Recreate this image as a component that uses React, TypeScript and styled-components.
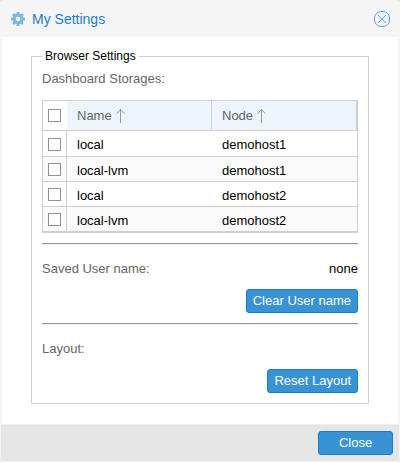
import React, { useState } from 'react';
import styled, { createGlobalStyle } from 'styled-components';

const GlobalStyle = createGlobalStyle`
  * { box-sizing: border-box; }
  body {
    margin: 0;
    background: #e6e6e6;
    font: 13px/17px "Liberation Sans", Arial, sans-serif;
    color: #000;
  }
`;

const Dialog = styled.section`
  display: flex;
  flex-direction: column;
  min-height: 100vh;
  border: 1px solid #f5f5f5;
  border-radius: 4px;
  background: #f5f5f5;
  overflow: hidden;
`;

const Header = styled.header`
  display: flex;
  align-items: center;
  gap: 7px;
  height: 36px;
  padding: 0 9px 0 10px;
`;

const Title = styled.h1`
  flex: 1;
  margin: 0;
  font-size: 14px;
  font-weight: 400;
  color: #1e80c8;
`;

const CloseTool = styled.button`
  display: flex;
  padding: 0;
  border: 0;
  background: none;
  cursor: pointer;
`;

const Body = styled.main`
  flex: 1;
  margin: 0 1px;
  padding: 11px 29px 20px;
  background: #fff;
`;

const Fieldset = styled.fieldset`
  min-width: 0;
  margin: 0;
  padding: 5px 10px 10px;
  border: 1px solid #cfcfcf;
`;

const Legend = styled.legend`
  padding: 0 3px;
  font-size: 12px;
`;

const Field = styled.div<{ $tall?: boolean }>`
  display: flex;
  justify-content: space-between;
  height: ${(p) => (p.$tall ? '30px' : '29px')};
`;

const Caption = styled.span`
  color: #666;
`;

const Grid = styled.table`
  width: 100%;
  table-layout: fixed;
  border: 1px solid #cfcfcf;
  border-spacing: 0;
  font-size: 13px;
  margin-bottom: 10px;
`;

const CheckCol = styled.col`
  width: 24px;
`;

const HeadCell = styled.th`
  height: 30px;
  padding: 0 10px;
  border-right: 1px solid #cfcfcf;
  border-bottom: 1px solid #cfcfcf;
  background: #edf4fb;
  color: #666;
  font-weight: 400;
  text-align: left;
`;

const HeadCheck = styled.th`
  padding: 0 5px;
  border-bottom: 1px solid #cfcfcf;
`;

const HeadLabel = styled.span`
  display: flex;
  align-items: center;
  gap: 4px;
`;

const Cell = styled.td`
  height: 25px;
  padding: 2px 10px 0;
  border-bottom: 1px solid #cfcfcf;
`;

const CheckCell = styled.td`
  padding: 0 0 0 5px;
  border-right: 1px solid #cfcfcf;
  border-bottom: 1px solid #cfcfcf;
`;

const Row = styled.tr`
  &:nth-child(even) { background: #fafafa; }
  &:first-child ${Cell} { height: 26px; }
  &:first-child ${CheckCell} { padding-top: 2px; }
`;

const Check = styled.input`
  display: block;
  appearance: none;
  width: 13px;
  height: 13px;
  margin: 0;
  border: 1px solid #919191;
  background: #fff;
  &:checked { background: #3892d4; }
`;

const Rule = styled.hr`
  height: 2px;
  margin: 0 0 15px;
  border: 0;
  border-top: 1px solid #999;
  border-bottom: 1px solid #eee;
`;

const Actions = styled.div`
  display: flex;
  justify-content: flex-end;
  margin-bottom: 10px;
  &:last-child { margin-bottom: 0; }
`;

const Button = styled.button<{ $wide?: boolean }>`
  height: 24px;
  min-width: ${(p) => (p.$wide ? '75px' : '0')};
  padding: 0 6px;
  border: 1px solid #157fcc;
  border-radius: 3px;
  background: #3892d4;
  color: #fff;
  font: inherit;
  line-height: 22px;
  cursor: pointer;
`;

const Footer = styled.footer`
  display: flex;
  justify-content: flex-end;
  padding: 6px;
  border-top: 1px solid #f0f0f0;
  background: #e6e6e6;
`;

const Gear = () => (
  <svg width="14" height="14" viewBox="0 0 14 14" aria-hidden="true">
    <g fill="#7fb8e1">
      {[0, 45, 90, 135].map((a) => (
        <rect key={a} x="5.5" y="0" width="3" height="14" rx="0.6" transform={`rotate(${a} 7 7)`} />
      ))}
    </g>
    <circle cx="7" cy="7" r="3.8" fill="none" stroke="#7fb8e1" strokeWidth="3.2" />
    <circle cx="7" cy="7" r="2.3" fill="#f5f5f5" />
  </svg>
);

const CloseIcon = () => (
  <svg width="16" height="16" viewBox="0 0 16 16" fill="none" aria-hidden="true">
    <rect x="0.5" y="0.5" width="15" height="15" rx="6.5" stroke="#57a3da" />
    <path d="M4 4l8 8M12 4l-8 8" stroke="#5fa7dc" />
  </svg>
);

const SortArrow = () => (
  <svg width="10" height="14" viewBox="0 0 10 14" fill="none" stroke="#999" aria-hidden="true">
    <path d="M4.5 0.5v13.5M0.5 4.8l4-4.2l4 4.2" />
  </svg>
);

const storages = [
  { name: 'local', node: 'demohost1' },
  { name: 'local-lvm', node: 'demohost1' },
  { name: 'local', node: 'demohost2' },
  { name: 'local-lvm', node: 'demohost2' },
];

export default function App() {
  const [picked, setPicked] = useState<boolean[]>(storages.map(() => false));
  const toggle = (i: number) => setPicked(picked.map((v, n) => (n === i ? !v : v)));

  return (
    <>
      <GlobalStyle />
      <Dialog role="dialog" aria-labelledby="title">
        <Header>
          <Gear />
          <Title id="title">My Settings</Title>
          <CloseTool type="button" aria-label="Close dialog"><CloseIcon /></CloseTool>
        </Header>
        <Body>
          <Fieldset>
            <Legend>Browser Settings</Legend>
            <Field $tall><Caption id="storages">Dashboard Storages:</Caption></Field>
            <Grid aria-labelledby="storages">
              <colgroup><CheckCol /><col /><col /></colgroup>
              <thead>
                <tr>
                  <HeadCheck>
                    <Check
                      type="checkbox"
                      aria-label="Select all"
                      checked={picked.every(Boolean)}
                      onChange={(e) => setPicked(picked.map(() => e.target.checked))}
                    />
                  </HeadCheck>
                  <HeadCell><HeadLabel>Name<SortArrow /></HeadLabel></HeadCell>
                  <HeadCell><HeadLabel>Node<SortArrow /></HeadLabel></HeadCell>
                </tr>
              </thead>
              <tbody>
                {storages.map((s, i) => (
                  <Row key={i}>
                    <CheckCell>
                      <Check
                        type="checkbox"
                        aria-label={`${s.name} on ${s.node}`}
                        checked={picked[i]}
                        onChange={() => toggle(i)}
                      />
                    </CheckCell>
                    <Cell>{s.name}</Cell>
                    <Cell>{s.node}</Cell>
                  </Row>
                ))}
              </tbody>
            </Grid>
            <Rule />
            <Field><Caption>Saved User name:</Caption><span>none</span></Field>
            <Actions><Button type="button">Clear User name</Button></Actions>
            <Rule />
            <Field><Caption>Layout:</Caption></Field>
            <Actions><Button type="button">Reset Layout</Button></Actions>
          </Fieldset>
        </Body>
        <Footer><Button type="button" $wide>Close</Button></Footer>
      </Dialog>
    </>
  );
}
